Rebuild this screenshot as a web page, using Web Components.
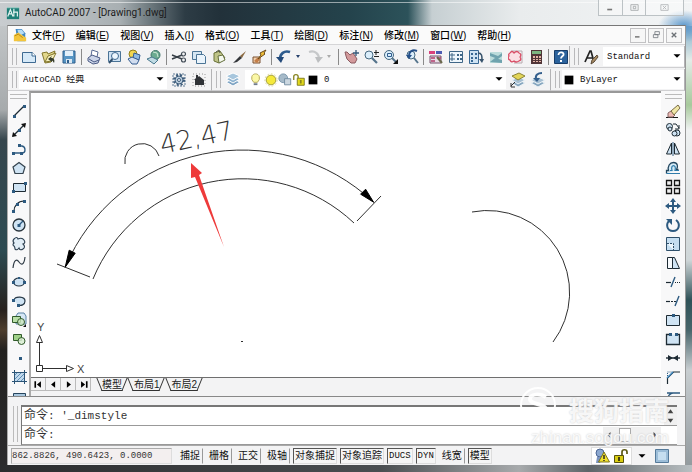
<!DOCTYPE html>
<html lang="zh-CN">
<head>
<meta charset="utf-8">
<title>AutoCAD 2007 - [Drawing1.dwg]</title>
<style>
html,body{margin:0;height:100%}
body{font-family:"Liberation Sans","Noto Sans CJK SC",sans-serif;font-size:11px;color:#222;
  --face:#f3f3f4;--line:#8d8d8d;--soft:#c4c4c6;--mono:"Liberation Mono","Noto Sans CJK SC",monospace}
</style>
</head>
<body>
<cad-window></cad-window>
<script>
const N='#2d5a80', K='#1d2a33', B='#cfe3f3';
const st=(c,w=1)=>`fill="none" stroke="${c}" stroke-width="${w}"`;
const ICONS={
 app:`<path d="M1 2h14v13H1z" fill="#1f7f78"/><path d="M2 12 5 4l3 8M3 9h4M8 7h5v5M9 3v9" ${st('#e6f5f2',1.3)}/><path d="M1 2h14" ${st('#9fd0c8')}/>`,
 doc:`<path d="M3 1h7l4 5v9H5z" fill="#3f87c3"/><path d="M5 2h5l3 4-6 3z" fill="#b7dcf5"/><path d="M1 8l5-3 9 6v4H1z" fill="#f3c53c"/><path d="M2 9l4-2 5 4" ${st('#b38210')}/>`,
 new:`<path d="M1.500 3.500h10l3 3v7h-13z" fill="#d6e9f8" stroke="#3e6a92"/><path d="M11 3v4h4" fill="#fff" stroke="#3e6a92"/>`,
 open:`<path d="M1 4l5-1 1 2 7-3-4 11-6 1z" fill="#e2d78c" stroke="#84782e"/><path d="M4 13l3-6 8-3-4 8z" fill="#f5efbd" stroke="#84782e"/><path d="M13 14c1-3 0-5-3-5l1-2-4 3 4 3v-2z" fill="#353d2d"/>`,
 save:`<path d="M2 2h12v12H2z" fill="#5795c4" stroke="#2f5f8c"/><path d="M4 2h8v5H4z" fill="#e3f0fa"/><path d="M5 10h6v4H5z" fill="#dbe8f2"/><path d="M6 11h2v3H6z" fill="#2f5f8c"/>`,
 print:`<path d="M5 7 6 1l6 2-1 5" fill="#fff" stroke="#5a6c94"/><path d="M2 9l4-3 8 3-2 5-5 1-5-3z" fill="#cbd4e8" stroke="#4b5b85"/><path d="M3 10l5 3 5-2" ${st('#4b5b85')}/>`,
 preview:`<path d="M2.500 2.500h12v10h-12z" fill="#cfe2f3" stroke="#4a7396"/><circle cx="9" cy="7" r="3.500" fill="#edf7ff" stroke="#3d6890"/><path d="M6.500 10 3 14" ${st('#31506e',2)}/>`,
 publish:`<circle cx="7" cy="5" r="4" fill="#f1d650" stroke="#927f1c"/><path d="M8 4l6 2-1 5-6-2z" fill="#8ebae4" stroke="#345c90"/><path d="M2 10l4-2 7 3-2 4-5 0z" fill="#d1ddef" stroke="#345c90"/>`,
 web:`<circle cx="9.500" cy="6" r="4.500" fill="#6bab91" stroke="#3d746a"/><path d="M7 3l4 1 1 4" ${st('#cde8d6')}/><path d="M1 10l5-2 6 3-4 4z" fill="#c0dbe4" stroke="#48788d"/>`,
 cut:`<path d="M1 6l10 4M1 10l10-4" ${st('#353d45',1.4)}/><circle cx="12.500" cy="5" r="2" ${st('#444e58',1.2)}/><circle cx="12.500" cy="11" r="2" ${st('#444e58',1.2)}/>`,
 copy:`<path d="M1.500 2.500h9v8h-9z" fill="#d5e6f3" stroke="#4b7596"/><path d="M5.500 5.500h7l2 2v7h-9z" fill="#eaf4fc" stroke="#4b7596"/>`,
 paste:`<path d="M3 4l6-2 5 7-6 5-5-2z" fill="#bfc488" stroke="#6a7239"/><path d="M7 7l5-1 2 5-6 3z" fill="#f4f8ed" stroke="#66713f"/><path d="M5 3l3-2 1 3" ${st('#525748')}/>`,
 brush:`<path d="M15 2 9 7l2 2z" fill="#8b6a42"/><path d="M9 7 4 12l-2 2 4-1 5-4z" fill="#33363a"/>`,
 paint:`<path d="M2 8h7v6H2z" fill="#f2d1ae" stroke="#7b5130"/><path d="M3 12l3-3 4 0-4 5z" fill="#c47e48"/><path d="M15 1 9 4l1 2-3 4 7-5-1-1z" fill="#f0be36" stroke="#6b4a19"/>`,
 undo:`<path d="M14 3C8 1 4 5 4 10" ${st('#2e5c8e',2.6)}/><path d="M0 8h8l-3 6z" fill="#234a7a"/>`,
 redo:`<path d="M2 3c6-2 10 2 10 7" ${st('#c6c8ca',2.2)}/><path d="M8 8h8l-5 6z" fill="#bcbec0"/>`,
 pan:`<path d="M3 7 2 3l2 0 3 3 3-2 4 6-2 4H8L4 10z" fill="#d39a9c" stroke="#8b5a60"/><path d="M13 1v6M10 4h6" ${st('#36597a',1.300)}/>`,
 zoomrt:`<circle cx="6" cy="6" r="4" fill="#dbeefb" stroke="#45677f"/><path d="M9 9l5 5" ${st('#55748c',2.2)}/><path d="M13 1v5M11 3.500h5M11 7.500h5" ${st('#222')}/>`,
 zoomwin:`<circle cx="6" cy="6" r="4.500" fill="#dbeefb" stroke="#45677f"/><path d="M4.500 4.500h4v3h-4z" ${st('#2e5c8e')}/><path d="M9 9l4 4" ${st('#55748c',2)}/><path d="M15 10v5h-5z" fill="#111"/>`,
 zoomprev:`<circle cx="8" cy="6" r="4" fill="#dbeefb" stroke="#45677f"/><path d="M11 9l4 5" ${st('#55748c',2)}/><path d="M14 2C9 0 6 3 6 7" ${st('#25508a',2)}/><path d="M3 6h6l-3 4z" fill="#25508a"/>`,
 props:`<path d="M1 2h6v3H1z" fill="#d9417b"/><path d="M8 2h6v3H8z" fill="#4c5cb3"/><path d="M2 7h11v7H2z" fill="#e8dce6" stroke="#75536c"/><path d="M3 9h4M3 12h4M9 9h4" ${st('#b13d6c',1.4)}/><path d="M9 8l5 6" ${st('#6a6a4c',2)}/>`,
 dcenter:`<path d="M1.500 2.500h13v11h-13z" fill="#eef6fc" stroke="#3f6687"/><path d="M4 4v8M2 6h5M2 10h5" ${st('#3f6687')}/><path d="M9 5h2v2H9zM12 5h2v2h-2zM9 9h2v2H9zM12 9h2v2h-2z" fill="#3f6687"/>`,
 palettes:`<path d="M1.500 1.500h9v13h-9z" fill="#cfe3f3" stroke="#386894"/><path d="M3 4h2v2H3zM7 4h2v2H7zM3 8h2v2H3zM7 8h2v2H7zM3 11h2v2H3z" fill="#386894"/><path d="M10 4c4 0 4 3 4 7" ${st('#37536c',1.500)}/><path d="M11 10h5l-2 4z" fill="#37536c"/>`,
 sheets:`<path d="M2 3h12v11H2z" fill="#bcdcdb"/><path d="M2 4l8 3 4-3v3l-4 3-8-3zM2 13l5-4 7 2v3z" fill="#6fa3ae"/>`,
 markup:`<path d="M3 2h11v12H6" ${st('#b7aab0')}/><path d="M2 4q2-3 4 0 3-3 5 0 3 1 1 4 2 3-1 4-3 2-5 0-3 2-4-1-3-1-1-4-1-2 1-3z" fill="#fae0e4" stroke="#d94e66" stroke-width="1.300"/>`,
 calc:`<path d="M3 1h11v14H3z" fill="#503538"/><path d="M4 2h9v3H4z" fill="#7cb681"/><path d="M5 7h2v2H5zM8 7h2v2H8zM11 7h2v2h-2zM5 10h2v1H5zM8 10h2v1H8zM11 10h2v1h-2zM5 12h2v1H5zM8 12h2v1H8zM11 12h2v1h-2z" fill="#e5b6a8"/>`,
 help:`<path d="M1.500 1.500h13v13h-13z" fill="#2b629c" stroke="#173c68"/><path d="M5.500 6c0-4 6-3 5 0-1 1.500-2.500 1.500-2.500 3.500" ${st('#fff',1.800)}/><path d="M7 11h2v2H7z" fill="#fff"/>`,
 style:`<path d="M2 13 7 2h1l3 11M4 9h6" ${st('#222',1.700)}/><path d="M15 8l-4 5-3 2 1-4 5-5z" fill="#a78b64" stroke="#5a4a37"/>`,
 gear:`<path d="M2 2h12v12H2z" ${st('#5f7b95')} stroke-dasharray="2 1"/><circle cx="8" cy="8" r="5" ${st('#3d5c7b',2)} stroke-dasharray="2 2"/><circle cx="8" cy="8" r="4" fill="#b9cbdb" stroke="#3d5c7b"/><circle cx="8" cy="8" r="1.500" fill="#f4f8fb" stroke="#3d5c7b"/>`,
 home:`<path d="M2 2h12v12H2z" ${st('#979797')} stroke-dasharray="1 2"/><path d="M3 8l2-2V3h2v2l1-1 5 4v5H4V8z" fill="#2f3236"/>`,
 layers:`<path d="M1 10l7-3 7 3-7 4z" fill="#7ea4c4" stroke="#fff"/><path d="M1 7l7-3 7 3-7 4z" fill="#8fb4d1" stroke="#fff"/><path d="M1 4l7-3 7 3-7 4z" fill="#a7c6dd" stroke="#fff"/>`,
 bulb:`<path d="M5 11Q2 8 3 5c1-4 7-4 8 0q1 3-2 6z" fill="#fbf8a6" stroke="#b4a957"/><path d="M5 12h4v2H5z" fill="#707b8a"/>`,
 sun:`<circle cx="8" cy="8" r="5.500" fill="#f5e93b" stroke="#9c9734"/><circle cx="8" cy="8" r="7" ${st('#d6d18b')} stroke-dasharray="2 2"/>`,
 vpfreeze:`<circle cx="6" cy="6" r="5" fill="#a6bac9" stroke="#7391a8"/><path d="M7.500 6.500h7v7h-7z" fill="#cbd7e0" stroke="#6f899e"/>`,
 lock:`<path d="M2 8V4c0-3 5-3 5 0v2" ${st('#85821e',1.500)}/><path d="M6 6h8v8H6z" fill="#e2d91c" stroke="#77741a"/><path d="M9 8h2v4H9z" fill="#8a861e"/>`,
 swatch:`<path d="M3 3h10v10H3z" fill="#000"/>`,
 laycur:`<path d="M2 11l7-3 6 3-7 4z" fill="#86a6bf" stroke="#eef3f6"/><path d="M2 8l7-3 6 3-7 4z" fill="#a6bfd2" stroke="#eef3f6"/><path d="M2 4l7-3 6 3-7 4z" fill="#e3d557" stroke="#8b8437"/><path d="M1 14l4-4M1 11v4h4" ${st('#333')}/>`,
 layprev:`<path d="M1 11l7-3 7 3-7 4z" fill="#86a6bf" stroke="#eef3f6"/><path d="M1 8l7-3 7 3-7 4z" fill="#a6bfd2" stroke="#eef3f6"/><path d="M12 1C8 1 5 3 6 7" ${st('#335e8c',2)}/><path d="M3 6h7l-3 4z" fill="#335e8c"/>`,
 line:`<path d="M3 13 13 3" ${st(K,1.200)}/><path d="M2 12h3v3H2zM12 2h3v3h-3z" fill="${N}"/>`,
 xline:`<path d="M2 14 14 2" ${st(K,1.200)}/><path d="M1 15l1-5 4 4zM15 1l-5 1 4 4z" fill="#111"/><path d="M7 7h3v3H7z" fill="${N}"/>`,
 pline:`<path d="M3 12h8c4 0 4-6 0-7H9" ${st(N,1.300)}/><path d="M1 11h3v3H1zM9 11h3v3H9zM7 3h3v3H7z" fill="${N}"/>`,
 polygon:`<path d="M8 2.500 14 7l-2 6.500H4L2 7z" fill="${B}" stroke="#34434e" stroke-width="1.200"/>`,
 rect:`<path d="M2.500 4.500h12v8h-12z" fill="${B}" stroke="${K}"/><path d="M1 11h3v3H1zM13 3h3v3h-3z" fill="${N}"/>`,
 arc:`<path d="M3 13C3 8 7 3 13 3" ${st(K,1.200)}/><path d="M1 12h3v3H1zM5 5h3v3H5zM12 2h3v3h-3z" fill="${N}"/>`,
 circle:`<circle cx="8" cy="8" r="6" fill="${B}" stroke="#28333b" stroke-width="1.300"/><path d="M8 8l4-4" ${st(N,1.200)}/><path d="M6.500 7h3v3h-3z" fill="${N}"/>`,
 cloud:`<path d="M3 3q3-3 4 0 4-2 6 1 2 3-1 4 3 3 0 5-3 2-4-1-2 3-4 1 0-2-1-3-2-1 0-3-2-2 0-4z" fill="#e2eef7" stroke="#2c3f50" stroke-width="1.100"/>`,
 spline:`<path d="M2 13C3 4 6 4 8 7s5 4 6-5" ${st('#2f3b45',1.200)}/>`,
 ellipse:`<ellipse cx="8" cy="8" rx="5.500" ry="4" fill="${B}" stroke="#223240" stroke-width="1.200"/><path d="M1 7h3v3H1zM12 7h3v3h-3zM7 3h2v2H7z" fill="${N}"/>`,
 ellarc:`<path d="M3 7c1-4 11-4 11 1 0 4-4 5-7 4" fill="${B}" stroke="#273846" stroke-width="1.200"/><path d="M1 6h3v3H1zM6 11h3v3H6z" fill="${N}"/>`,
 insert:`<path d="M5 4l2-3h6l2 3v8H5z" fill="#d6e7f5" stroke="#5b83a5"/><path d="M1.500 4.500h8v6h-8z" fill="#b9dfa8" stroke="#315b2b"/><circle cx="10" cy="10" r="3.500" fill="#cde9c1" fill-opacity=".8" stroke="#315b2b"/><path d="M15 12v3h-3z" fill="#111"/>`,
 block:`<path d="M2.500 3.500h8v6h-8z" fill="#9fd089" stroke="#315b2b"/><circle cx="10.500" cy="10" r="3.500" fill="#d9edd2" fill-opacity=".85" stroke="#315b2b"/>`,
 point:`<path d="M8 7h3v3H8z" fill="${N}"/>`,
 hatch:`<path d="M3 3h11v10H3z" fill="#c0d9ed"/><path d="M3 7l4-4M3 11l8-8M5 13l9-9M9 13l5-5" ${st('#5e8db5')}/><path d="M3.500 1v14M13.500 1v14M1 3.500h15M1 12.500h15" ${st('#2c5577')}/>`,
 gradient:`<path d="M2.500 5.500h12v8h-12z" fill="#a8c6dd" stroke="#26455e"/>`,
 erase:`<path d="M1 14.500h12" ${st('#181818')}/><path d="M3 10l3-2 4 4-2 2H3z" fill="#edb9b3" stroke="#866"/><path d="M6 8l7-6 2 3-6 7z" fill="#f0e7a6" stroke="#786a46"/>`,
 copyobj:`<circle cx="4.500" cy="4.500" r="3" fill="${B}" stroke="${K}"/><circle cx="5" cy="7" r="2" fill="${B}" stroke="${K}"/><circle cx="12" cy="11" r="3" fill="${B}" stroke="${K}"/><circle cx="9.500" cy="11.500" r="2.500" fill="${B}" stroke="${K}"/><path d="M8 2h3l3 4M14 3v4h-4" ${st(K)}/>`,
 mirror:`<path d="M6.500 2v11h-5zM9.500 2v11h5z" fill="${B}" stroke="${K}"/><path d="M8 1v14" ${st(N)}/>`,
 offset:`<path d="M1.500 13.500v-3h2c-1-4 1-8 5-8s5 4 3 7h2" fill="#d4eaf6" stroke="#22465f" stroke-width="1.300"/><path d="M1.500 13.500H15M5 10.500h2C5 4 12 4 10 10.500h4" ${st('#307cab',1.200)}/>`,
 array:`<path d="M1.500 1.500h5v5h-5zM9.500 1.500h5v5h-5zM1.500 9.500h5v5h-5zM9.500 9.500h5v5h-5z" fill="#eee" stroke="#141414" stroke-width="1.300"/>`,
 move:`<path d="M8 2v12M2 8h12" ${st(N,2)}/><path d="M8 0l3 4H5zM8 16l3-4H5zM0 8l4-3v6zM16 8l-4-3v6z" fill="${N}"/>`,
 rotate:`<path d="M5 3C0 7 2 14 8 14s8-7 3-11" ${st(N,2)}/><path d="M1 2h6v6z" fill="${N}"/>`,
 scale:`<path d="M1.500 1.500h13v13h-13z" fill="#c5def1" stroke="#2f506b"/><path d="M2 7.500h6.500V14" fill="#eef7fd" stroke="#2f506b" stroke-dasharray="2 1"/>`,
 stretch:`<path d="M2.500 2.500h5v11h-5z" fill="#f7fafd" stroke="${K}"/><path d="M7.500 2.500h2l5 11h-7z" fill="${B}" stroke="${K}"/>`,
 trim:`<path d="M1 8.500h5" ${st(K,1.200)}/><path d="M10 8.500h6" ${st(K)} stroke-dasharray="1 1"/><path d="M6 13l4-10" ${st(N,1.400)}/>`,
 extend:`<path d="M1 8.500h4" ${st(K,1.200)}/><path d="M6 8.500h5" ${st(K)} stroke-dasharray="2 1"/><path d="M10 13l4-10" ${st(N,1.400)}/>`,
 breakpt:`<path d="M1.500 3.500h13v10h-13z" fill="${B}" stroke="${K}"/><path d="M7 2h3v3H7z" fill="${N}"/>`,
 break:`<path d="M5 3.500H1.500v10h13v-10H11" fill="${B}" stroke="${K}" stroke-width="1.300"/><path d="M4 2h3v3H4zM10 2h3v3h-3z" fill="${N}"/>`,
 join:`<path d="M1 8h14" ${st(K,1.400)}/><path d="M3 5l5 3-5 3zM13 5 8 8l5 3z" fill="${K}"/>`,
 chamfer:`<path d="M2.500 15V9l6-6H15" ${st(K,1.200)}/><path d="M2.500 9V3h6" ${st(N)} stroke-dasharray="1 1"/><path d="M2 9l6-6" ${st('#3e86bd',1.500)}/>`,
 fillet:`<path d="M2 5h6M2 15c0-8 4-10 6-10h7" ${st(N,1.300)}/>`,
 comm:`<circle cx="6" cy="5" r="4" fill="#8ba7cf" stroke="#4b6593"/><path d="M3 9l6 0-3 6H2z" fill="#7a93be"/><path d="M10 4l5.500 10h-11z" fill="#f2e22d" stroke="#7c741a"/><path d="M10 7v4M10 12v1" ${st('#222',1.400)}/>`,
 unlock:`<path d="M9 8V4c0-3 5-3 5 0v2" ${st('#5d5914',1.700)}/><path d="M1.500 7.500h9v7h-9z" fill="#d9cd12" stroke="#57530f"/><path d="M5 9h2v4H5z" fill="#44410e"/>`,
 clean:`<path d="M1.500 1.500h13v13h-13z" fill="#9cbdd8" stroke="#557a9a"/><path d="M4 4h8v8H4z" fill="#c6def0"/>`,
 min:`<path d="M4 10.500h6" ${st('#777',2)}/>`,
 restore:`<path d="M6.500 3.500h6v4h-6zM4.500 7.500h6v4h-6z" ${st('#6a7077')}/>`,
 max:`<path d="M3.500 4.500h9v7h-9zM6.500 6.500h3v3h-3z" ${st('#a3a6a8')}/>`,
 close:`<path d="M5 5l6 6M11 5l-6 6" ${st('#6b7075',1.800)}/>`,
 xclose:`<path d="M3.500 4.500h9v7h-9zM6 6l4 4M10 6l-4 4" ${st('#b0b3b5')}/>`,
 first:`<path d="M3 4h2v8H3zM11 4v8L6 8z" fill="#000"/>`,
 prev:`<path d="M10 4v8L5 8z" fill="#000"/>`,
 next:`<path d="M6 4v8l5-4z" fill="#000"/>`,
 last:`<path d="M11 4h2v8h-2zM5 4v8l5-4z" fill="#000"/>`,
 drop:`<path d="M4 6h8l-4 4z" fill="#000"/>`,
 up:`<path d="M8 4l5 7H3z" fill="#444"/>`,
 down:`<path d="M3 5h10l-5 7z" fill="#444"/>`,
 left:`<path d="M10 4v8L6 8z" fill="#444"/>`,
 right:`<path d="M6 4v8l4-4z" fill="#444"/>`
};
const svg=(n,s=16)=>`<svg viewBox="0 0 16 16" width="${s}" height="${s}" aria-hidden="true">${ICONS[n]}</svg>`;
const define=(name,css,html)=>customElements.define(name,class extends HTMLElement{
  connectedCallback(){
    if(this.shadowRoot)return;
    const root=this.attachShadow({mode:'open'});
    root.innerHTML=`<style>*{box-sizing:border-box}svg{display:block}button{font:inherit;color:inherit;border:0;padding:0;background:none}${css}</style>`+(typeof html==='function'?html(this):html);
  }
});
const tool=(n,l)=>`<cad-tool icon="${n}" label="${l}"></cad-tool>`;
const tools=a=>a.map(x=>x==='|'?'<cad-sep></cad-sep>':tool(...x.split(':'))).join('');

define('cad-tool',`:host{display:block;flex:none}button{display:block}`,
  e=>`<button type="button" aria-label="${e.getAttribute('label')}">${svg(e.getAttribute('icon'),e.getAttribute('size')||16)}</button>`);
define('cad-sep',`:host{display:block;flex:none;width:1px;height:16px;background:#8a8a8a}`,'');
define('cad-flyout',`:host{display:flex;flex:none}button.a{width:11px;display:grid;place-items:center}.a i{width:0;height:0;border:2px solid transparent;border-top:3px solid var(--arrow,#25406b);border-bottom:0}`,
  e=>`${tool(e.getAttribute('icon'),e.getAttribute('label'))}<button class="a" type="button" aria-label="${e.getAttribute('label')}列表"><i></i></button>`);
define('cad-band',`:host{display:flex;align-items:center;gap:4px;height:22px;padding-left:13px;border-right:1px solid #b3b3b5;border-bottom:1px solid #cfcfd1;
   background:linear-gradient(#b9b9bb,#b9b9bb) 4px 2px/1px 17px no-repeat,linear-gradient(#b9b9bb,#b9b9bb) 8px 2px/1px 17px no-repeat,var(--face)}`,'<slot></slot>');
define('cad-combo',`:host{display:flex;align-items:center;background:#fff;height:19px;position:relative;font:9px var(--mono);color:#111}
   select{appearance:none;border:0;background:none;font:inherit;color:inherit;flex:1;min-width:0;height:19px;padding:0 14px 0 4px;outline:0}
   .d{position:absolute;right:0;top:2px;pointer-events:none}`,
  e=>`<slot></slot><select aria-label="${e.getAttribute('label')}"><option>${e.getAttribute('value')}</option></select><span class="d">${svg('drop',14)}</span>`);

define('cad-title',`:host{display:flex;height:25px;align-items:center;padding-left:6px;position:relative}
   span{font:10px Roboto,"Noto Sans",sans-serif;color:#1c1c1c;margin-left:5px}
   .c{position:absolute;right:8px;top:0;display:flex;border:1px solid #bcc2c5;border-top:0;background:#ffffff66}
   .c button{width:23px;height:15px;display:grid;place-items:center}.c button+button{border-left:1px solid #bcc2c5}.c button:last-child{width:38px}`,
  `${svg('app',14)}<span>AutoCAD 2007 - [Drawing1.dwg]</span>
   <div class="c"><button aria-label="最小化">${svg('min',13)}</button><button aria-label="最大化">${svg('max',13)}</button><button aria-label="关闭">${svg('xclose',13)}</button></div>`);

const MENUS=['文件F','编辑E','视图V','插入I','格式O','工具T','绘图D','标注N','修改M','窗口W','帮助H'];
define('cad-menubar',`:host{display:flex;align-items:center;height:19px;padding-left:5px;background:#fafafa;border-bottom:1px solid #d5d5d7}
   nav{display:flex;gap:11px;margin-left:5px;flex:1}nav button{white-space:nowrap;font-size:10px;font-weight:500;line-height:17px;color:#000}nav span{font-weight:400}
   .w{display:flex;gap:2px;margin-right:3px}.w button{border:1px solid #c2c2c4;width:16px;height:15px;display:grid;place-items:center;background:#f6f6f6}`,
  `${svg('doc',14)}<nav>${MENUS.map(m=>`<button type="button">${m.slice(0,2)}<span>(<u>${m[2]}</u>)</span></button>`).join('')}</nav>
   <div class="w"><button aria-label="最小化图形">${svg('min',12)}</button><button aria-label="还原图形">${svg('restore',12)}</button><button aria-label="关闭图形">${svg('close',12)}</button></div>`);

define('cad-toolbars',`:host{display:grid;row-gap:1px;padding-top:1px;background:var(--face)}
   .r{display:flex}.grow{flex:1;min-width:0}.r cad-combo.grow{align-self:center}
   .ws{width:148px;margin-left:-2px}.bl{width:122px}.r .tight{padding-left:11px}.lay{padding-left:4px}`,
  `<div class="r"><cad-band>${tools(['new:新建','open:打开','save:保存','|','print:打印','preview:打印预览','publish:发布','web:三维DWF','|','cut:剪切','copy:复制','paste:粘贴','brush:特性匹配','paint:块编辑器','|'])}
     <cad-flyout icon="undo" label="放弃"></cad-flyout><cad-flyout icon="redo" label="重做" style="--arrow:#aaa"></cad-flyout>
     ${tools(['|','pan:实时平移','zoomrt:实时缩放','zoomwin:窗口缩放','zoomprev:缩放上一个','|','props:特性','dcenter:设计中心','palettes:工具选项板','sheets:图纸集','markup:标记集','calc:计算器','|','help:帮助'])}</cad-band>
     <cad-band class="grow">${tools(['style:文字样式'])}<cad-combo class="grow" label="文字样式" value="Standard"></cad-combo></cad-band></div>
   <div class="r"><cad-band><cad-combo class="ws" label="工作空间" value="AutoCAD 经典"></cad-combo>${tools(['gear:工作空间设置','home:我的工作空间'])}<span></span></cad-band>
     <cad-band class="grow">${tools(['layers:图层特性'])}<cad-combo class="grow lay" label="图层" value="0">${['bulb','sun','vpfreeze','lock','swatch'].map((n,i)=>svg(n,i?14:15)).join('')}</cad-combo>${tools(['laycur:置为当前','layprev:上一个图层'])}<span></span></cad-band>
     <cad-band class="tight"><cad-combo class="bl" label="颜色" value="ByLayer">${svg('swatch',14)}</cad-combo></cad-band></div>`);

define('cad-palette',`:host{display:flex;flex-direction:column;align-items:center;gap:3px;width:22px;height:0;min-height:100%;overflow:hidden;background:#f8f8f9}
   .g{flex:none;width:17px;height:5px;margin:3px 0 1px;border-top:1px solid #bbb;border-bottom:1px solid #bbb}`,
  e=>`<div class="g"></div>${tools(e.getAttribute('tools').split(' '))}`);

define('cad-drawing',`:host{display:block;position:relative;background:#fff;overflow:hidden;min-height:260px}svg{position:absolute;width:100%;height:100%}
   .dim{font:200 26px "DejaVu Sans","Liberation Sans",sans-serif;fill:#333}.ax{font:300 11px "Liberation Sans",sans-serif;fill:#444}`,
  `<svg role="img" aria-label="弧长标注"><g transform="translate(-31 -93)" fill="none" stroke="#303030">
    <path d="M93 279A162 162 0 0 1 354 223M65.200 267.200A192 192 0 0 1 373.600 202.200M57 264l33 13M357 221l24-25M125 164A17.500 17.500 0 0 1 159 156M472 212A82 82 0 0 1 553 342"/>
    <path d="M65.200 267.200l10-14-6-3zM373.600 202.200l-8-13-5 5z" fill="#000" stroke="#000"/>
    <path d="M241 341.500h2M36.500 365.500h6v6h-6zM39.500 365V343M42 368.500h24M36.500 342.500h6l-3-7zM66.500 365.500v6l7-3z"/>
    <path d="M191 163l11 10-3 2 25 72-29-70-4 1z" fill="#ee3a3a" stroke="none"/>
    <text class="dim" stroke="none" transform="translate(162 154) rotate(-12)">42,47</text>
    <text class="ax" stroke="none" x="37" y="331">Y</text><text class="ax" stroke="none" x="77" y="373">X</text></g></svg>`);

define('cad-layouts',`:host{display:flex;height:19px;background:var(--face);border-top:1px solid #6f6f6f}
   .n{display:flex}.n button{width:15px;height:13px;display:grid;place-items:center;border-right:1px solid #bbb;border-bottom:1px solid #bbb}
   [role=tablist]{display:flex;margin-left:6px}.t{position:relative;height:13px;line-height:12px;font-size:10px;padding:0 6px;margin-left:-1px}
   .t+.t{padding-left:7px}
   .t::before,.t::after{content:"";position:absolute;top:0;bottom:0;width:50%;border-bottom:1px solid #333}
   .t::before{left:3px;border-left:1px solid #333;transform:skewX(22deg)}.t::after{right:3px;border-right:1px solid #333;transform:skewX(-22deg)}`,
  `<div class="n">${[['first','第一个'],['prev','上一个'],['next','下一个'],['last','最后一个']].map(x=>`<button type="button" aria-label="${x[1]}">${svg(x[0],13)}</button>`).join('')}</div>
   <div role="tablist">${['模型','布局1','布局2'].map((t,i)=>`<button type="button" class="t" role="tab" aria-selected="${!i}">${t}</button>`).join('')}</div>`);

define('cad-command',`:host{display:block;position:relative;padding:8px 8px 0 13px;border-top:1px solid #888;
    background:linear-gradient(#bbb,#bbb) 5px 9px/1px 36px no-repeat,linear-gradient(#bbb,#bbb) 9px 9px/1px 36px no-repeat,var(--face)}
   .b{border-top:2px solid #777;border-left:1px solid #777;border-bottom:1px solid #999;background:#fff;font:11px/18px var(--mono);color:#333}
   .r{display:flex;height:18px;align-items:center}.r+.r{border-top:1px solid #999;height:19px}
   .h{flex:1;padding-left:2px;line-height:16px}b{font-weight:400;font-size:12px}label{padding-left:2px}
   input{flex:1;min-width:0;border:0;outline:0;height:16px;background:none;font:inherit}
   .v{width:13px;display:grid;background:#f0f0f0}.v button,.s button{display:grid;place-items:center}
   .s{width:58px;margin-right:16px;height:17px;display:flex;align-items:center;background:#f0f0f0}.s i{width:12px;height:14px;border:1px solid #aaa;background:#fff;margin:0 auto 0 4px}
   .wm{position:absolute;right:16px;top:0;display:grid;row-gap:7px;justify-items:end;color:#ffffffd9;text-shadow:0 0 2px #c4c4c4;pointer-events:none;font:bold 25px/24px "Noto Sans CJK SC",sans-serif}
   .wm small{font:17px/20px "Liberation Sans",sans-serif}.wm svg{position:absolute;right:112px;top:-11px}`,
  `<div class="b"><div class="r"><div class="h"><b>命令</b>: '_dimstyle</div><div class="v"><button aria-label="向上滚动">${svg('up',9)}</button><button aria-label="向下滚动">${svg('down',9)}</button></div></div>
   <div class="r"><label for="c"><b>命令</b>:</label><input id="c" type="text"><div class="s"><button aria-label="向左滚动">${svg('left',12)}</button><i></i><button aria-label="向右滚动">${svg('right',12)}</button></div></div></div>
   <div class="wm"><svg viewBox="0 0 38 38" width="38" height="38" fill="none" stroke="#fffffff0"><circle cx="19" cy="19" r="17" stroke-width="2"/><path d="M27 11c-6-4-16-3-16 2 0 6 16 4 16 11 0 6-12 6-17 2" stroke-width="4"/></svg><span>搜狗指南</span><small>zhinan.sogou.com</small></div>`);

define('cad-status',`:host{display:flex;align-items:center;gap:3px;height:20px;padding:1px 2px 1px 3px;background:var(--face);border-top:1px solid #aaa;font-size:10px}
   output{font:9px/14px var(--mono);width:161px;border:1px solid #ccc;border-color:#aaa #ddd #ddd #aaa;background:#f3efef;white-space:nowrap;color:#333;margin-right:2px}
   .m{height:16px;line-height:14px;padding:0 2px;border:1px solid transparent;border-right-color:#999;white-space:nowrap;color:#111}
   .m[aria-pressed=true]{border-color:#555 #ddd #ddd #555;background:#f5f5f5;padding:0 1px}.e{font-family:var(--mono);font-size:9px}
   .t{margin-left:auto;display:flex;align-items:center;gap:3px;background:#fff;border:1px solid #ddd;padding:0 2px}
   .last{margin:0 13px 0 2px}`,
  `<output>862.8826, 490.6423, 0.0000</output>${['捕捉','栅格','正交','极轴','对象捕捉*','对象追踪*','DUCS*','DYN*','线宽','模型*'].map(t=>`<button type="button" class="m${/^D/.test(t)?' e':''}" aria-pressed="${t.endsWith('*')}">${t.replace('*','')}</button>`).join('')}
   <div class="t"><cad-tool icon="comm" label="通信中心"></cad-tool><cad-tool icon="unlock" label="锁定"></cad-tool></div>
   <cad-tool icon="drop" size="14" label="状态行菜单"></cad-tool><cad-tool class="last" icon="clean" label="全屏显示"></cad-tool>`);

define('cad-window',`:host{display:flex;flex-direction:column;min-height:100vh;box-sizing:border-box;
    background:radial-gradient(ellipse 26px 16px at calc(100% - 8px) 26px,#5c98cc,#5c98cc00),
      linear-gradient(#fff8,#fff8) 0 2px/100% 1px no-repeat,
      linear-gradient(90deg,#c8cccf 0,#c0c5c8 50px,#a8afb2 120px,#6d797e 150px,#2d3c45 185px,#22313a 220px,#24434c 350px,#2c525a 408px,#c6cfd2 432px,#e9eced 520px,#f2f4f5) 0 0/100% 26px no-repeat,
      linear-gradient(90deg,#2b2c2e,#4a4e51 55%,#a7aaac 75%,#5d6468 85%,#b9bfc2) 0 100%/100% 7px no-repeat,
      linear-gradient(#c2c6c8 24px,#a6aaac 110px,#36464d 140px,#2d4b52 250px,#27211d 310px,#4d3d2d 330px,#22211f 350px,#2c2c2e) 0 0/8px 100% no-repeat,
      linear-gradient(#8ab4cc 30px,#e3ece8 60px,#a7c99c 105px,#f0f2f2 130px,#cfd6d8 260px,#2f5258 300px,#47656b 330px,#c8ced1 370px,#8f979b) 100% 0/8px 100% no-repeat}
   .c{flex:1;display:flex;flex-direction:column;margin:0 6px 7px 7px;border-left:1px solid #aaa;border-right:1px solid #999;border-top:1px solid #777;background:var(--face)}
   .m{flex:1;display:grid;grid-template-columns:21px minmax(0,1fr) 24px}
   .v{display:flex;flex-direction:column;border-left:2px solid #aaa;border-top:2px solid #999}cad-drawing{flex:1}cad-palette{width:auto}`,
  `<cad-title></cad-title><div class="c"><cad-menubar></cad-menubar><cad-toolbars></cad-toolbars>
   <div class="m"><cad-palette tools="line:直线 xline:构造线 pline:多段线 polygon:正多边形 rect:矩形 arc:圆弧 circle:圆 cloud:修订云线 spline:样条曲线 ellipse:椭圆 ellarc:椭圆弧 insert:插入块 block:创建块 point:点 hatch:图案填充 gradient:渐变色"></cad-palette>
   <div class="v"><cad-drawing></cad-drawing><cad-layouts></cad-layouts></div>
   <cad-palette tools="erase:删除 copyobj:复制 mirror:镜像 offset:偏移 array:阵列 move:移动 rotate:旋转 scale:缩放 stretch:拉伸 trim:修剪 extend:延伸 breakpt:打断于点 break:打断 join:合并 chamfer:倒角 fillet:圆角"></cad-palette></div>
   <cad-command></cad-command><cad-status></cad-status></div>`);
</script>
</body>
</html>
